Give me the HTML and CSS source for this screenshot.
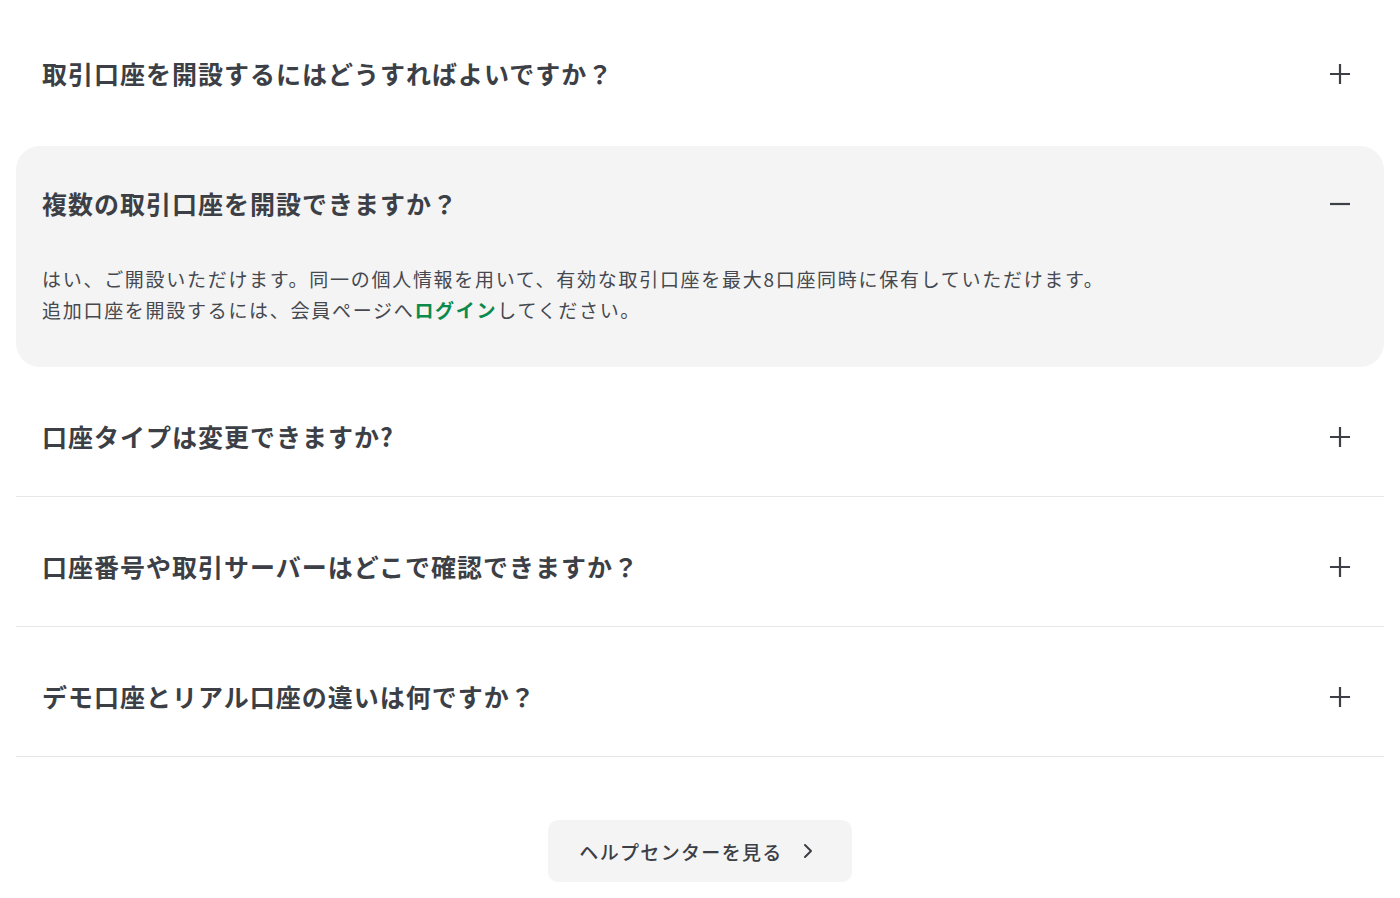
FILE: index.html
```html
<!DOCTYPE html>
<html lang="ja">
<head>
<meta charset="utf-8">
<title>FAQ</title>
<link rel="stylesheet" href="styles.css">
</head>
<body>
<main class="faq">
  <div class="faq-list">
    <div class="item item-before-open">
      <div class="q">
        <span class="q-text">取引口座を開設するにはどうすればよいですか？</span>
        <svg class="icon" viewBox="0 0 22 22" width="22" height="22"><path d="M11 1v20M1 11h20" stroke="#3c3f46" stroke-width="2.2" fill="none"/></svg>
      </div>
    </div>
    <div class="item open">
      <div class="q">
        <span class="q-text">複数の取引口座を開設できますか？</span>
        <svg class="icon" viewBox="0 0 22 22" width="22" height="22"><path d="M1 11h20" stroke="#3c3f46" stroke-width="2.2" fill="none"/></svg>
      </div>
      <div class="a">
        <p>はい、ご開設いただけます。同一の個人情報を用いて、有効な取引口座を最大8口座同時に保有していただけます。</p>
        <p>追加口座を開設するには、会員ページへ<a href="#" class="link">ログイン</a>してください。</p>
      </div>
    </div>
    <div class="item">
      <div class="q">
        <span class="q-text">口座タイプは変更できますか?</span>
        <svg class="icon" viewBox="0 0 22 22" width="22" height="22"><path d="M11 1v20M1 11h20" stroke="#3c3f46" stroke-width="2.2" fill="none"/></svg>
      </div>
    </div>
    <div class="item">
      <div class="q">
        <span class="q-text">口座番号や取引サーバーはどこで確認できますか？</span>
        <svg class="icon" viewBox="0 0 22 22" width="22" height="22"><path d="M11 1v20M1 11h20" stroke="#3c3f46" stroke-width="2.2" fill="none"/></svg>
      </div>
    </div>
    <div class="item">
      <div class="q">
        <span class="q-text">デモ口座とリアル口座の違いは何ですか？</span>
        <svg class="icon" viewBox="0 0 22 22" width="22" height="22"><path d="M11 1v20M1 11h20" stroke="#3c3f46" stroke-width="2.2" fill="none"/></svg>
      </div>
    </div>
  </div>
  <div class="more">
    <a href="#" class="more-btn">
      <span>ヘルプセンターを見る</span>
      <svg class="chev" viewBox="0 0 10 16" width="10" height="16"><path d="M2 2l6 6-6 6" stroke="#3c3f46" stroke-width="2" fill="none" stroke-linecap="round" stroke-linejoin="round"/></svg>
    </a>
  </div>
</main>
</body>
</html>
```
FILE: styles.css
```css
* { box-sizing: border-box; }
html, body { margin: 0; padding: 0; background: #ffffff; }
body {
  font-family: "Noto Sans CJK JP", "Noto Sans", sans-serif;
  color: #3c3f46;
}
.faq { padding: 4px 16px 0; }
.faq-list { display: flex; flex-direction: column; }
.item { border-bottom: 1px solid #e7e7e7; }
.item-before-open { border-bottom-color: transparent; }
.q {
  display: flex;
  align-items: center;
  justify-content: space-between;
  padding: 51px 33px 42px 26px;
}
.q-text {
  font-size: 25px;
  line-height: 36px;
  font-weight: 600;
  letter-spacing: 0.04em;
}
.icon { display: block; flex: none; margin-top: 1px; }
.item.open {
  background: #f4f4f4;
  border-radius: 24px;
  border-bottom: none;
  margin-top: 12px;
}
.item.open .q { padding: 39px 33px 42px 26px; }
.a { padding: 0 26px 42px; }
.a p {
  margin: 0;
  font-size: 19px;
  line-height: 31px;
  letter-spacing: 0.09em;
  color: #45484f;
}
.link { color: #0b8a4c; text-decoration: none; font-weight: 600; }
.more { display: flex; justify-content: center; padding-top: 63px; }
.more-btn {
  display: inline-flex;
  align-items: center;
  gap: 20px;
  height: 62px;
  padding: 0 39px 0 31px;
  background: #f4f4f4;
  border-radius: 10px;
  text-decoration: none;
  color: #3c3f46;
  font-size: 19px;
  font-weight: 500;
  letter-spacing: 0.07em;
}
.chev { display: block; }
```
